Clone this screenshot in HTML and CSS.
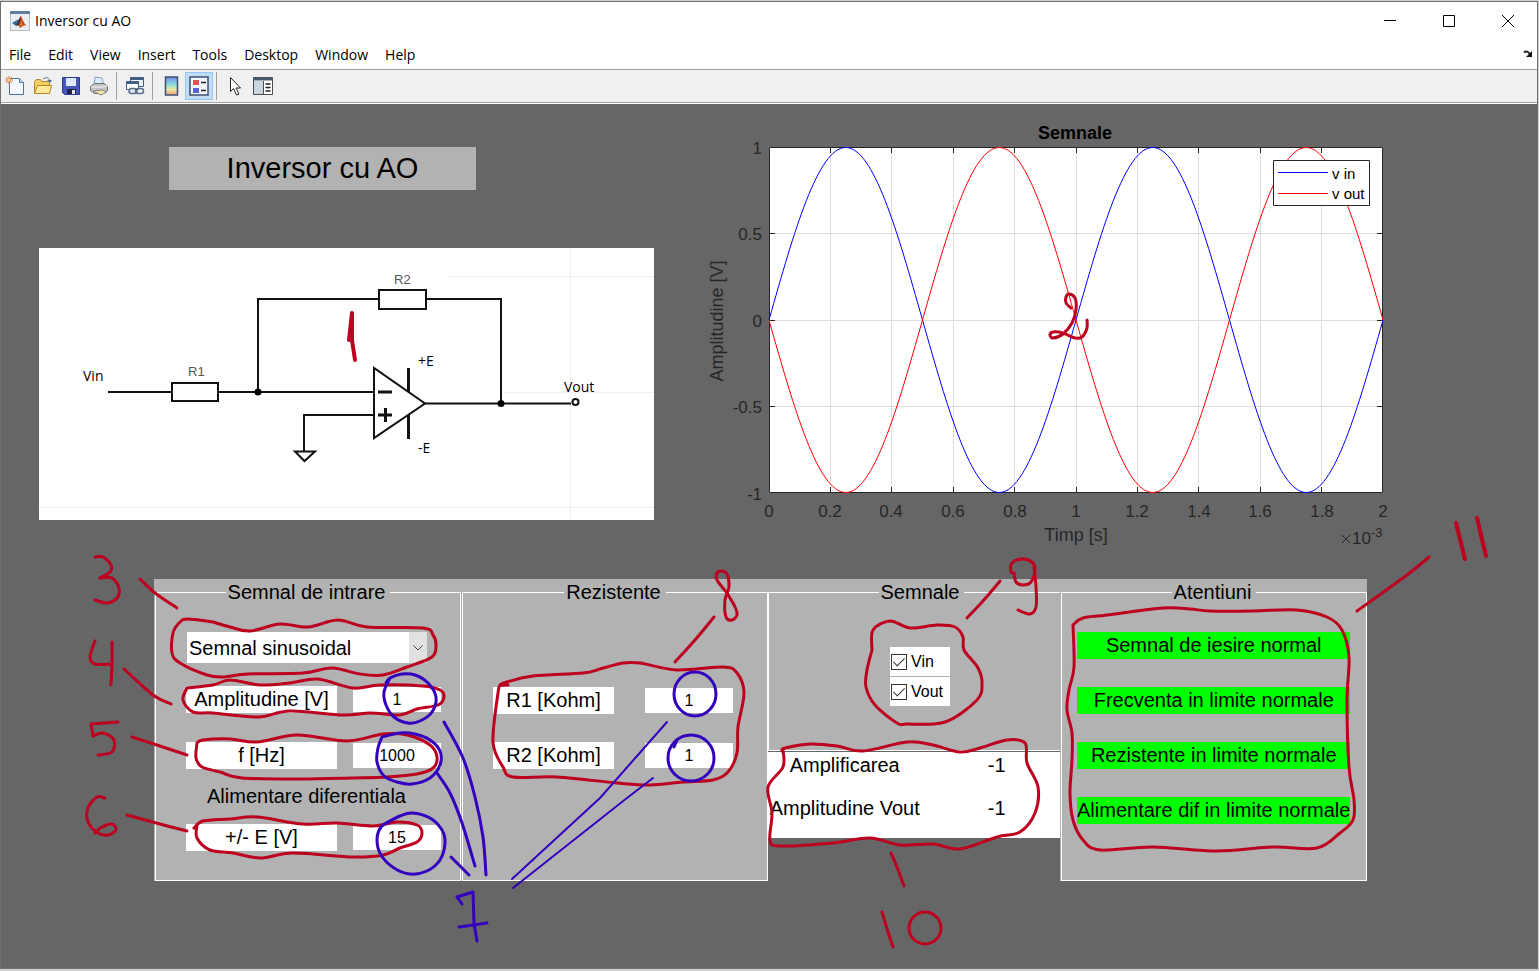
FILE: index.html
```html
<!DOCTYPE html>
<html lang="ro">
<head>
<meta charset="utf-8">
<title>Inversor cu AO</title>
<link rel="stylesheet" href="styles.css">
</head>
<body>
<main class="window">
  <header class="titlebar">
    <svg class="app-icon" viewBox="0 0 20 20" aria-hidden="true">
      <rect x="0.5" y="0.5" width="19" height="19" fill="#eceff1" stroke="#b9bec2"/>
      <rect x="0" y="0" width="20" height="3" fill="#5f7f9c"/>
      <path d="M2 12l5-3 3-1-2 6-2 1z" fill="#2a6f9e"/>
      <path d="M6 14c2-1 3-8 5-9 1 2 3 8 6 10-2-1-3-1-4 0l-3 2-2-3z" fill="#c8491d"/>
      <path d="M11 5c-1 1-2 6-5 9l2 .5c2-2 3-6 3-9.500z" fill="#4a2432"/>
      <path d="M11 8c0 3-.5 6-1 8l2-2z" fill="#f29b38"/>
    </svg>
    <h1 class="window-title">Inversor cu AO</h1>
    <div class="window-buttons">
      <button type="button" aria-label="Minimize"><svg viewBox="0 0 14 14"><path d="M1 6.500h12"/></svg></button>
      <button type="button" aria-label="Maximize"><svg viewBox="0 0 14 14"><path d="M1.500 1.500h11v11h-11z"/></svg></button>
      <button type="button" aria-label="Close"><svg viewBox="0 0 14 14"><path d="M1 1l12 12M13 1L1 13"/></svg></button>
    </div>
  </header>

  <nav class="menubar">
    <button type="button">File</button>
    <button type="button">Edit</button>
    <button type="button">View</button>
    <button type="button">Insert</button>
    <button type="button">Tools</button>
    <button type="button">Desktop</button>
    <button type="button">Window</button>
    <button type="button">Help</button>
    <button type="button" class="dock" aria-label="Dock figure"><svg viewBox="0 0 10 8"><path d="M1 2.500C3 .5 5.500 1.500 7 4.500" fill="none" stroke="#222" stroke-width="2"/><path d="M9 1v6H3z" fill="#111"/></svg></button>
  </nav>

  <div class="toolbar" role="toolbar" aria-label="Figure">
    <button type="button" aria-label="New figure"><svg viewBox="0 0 20 20"><path d="M4.500 2.500h10l4 4v12h-14z" fill="#f6faff" stroke="#51739f"/><path d="M14.500 2.500v4h4" fill="#c7d9ee" stroke="#51739f"/><path d="M4 0v8M0 4h8M1 1l6 6M7 1L1 7" stroke="#d9703c"/><circle cx="4" cy="4" r="1.500" fill="#ffd27a"/></svg></button>
    <button type="button" aria-label="Open"><svg viewBox="0 0 20 20"><path d="M1.500 17.500V5.500l2-2h4l1 2h8v12z" fill="#f3cf62" stroke="#b5892a"/><path d="M1.500 17.500l3-8h14l-2 8z" fill="#ffe998" stroke="#b5892a"/><path d="M10 3c3-2 6-2 7 2" fill="none" stroke="#52779a"/><path d="M14 4h5l-2 3z" fill="#52779a"/></svg></button>
    <button type="button" aria-label="Save"><svg viewBox="0 0 20 20"><path d="M1.500 1.500h17v17h-15l-2-2z" fill="#4758bd" stroke="#30368a"/><path d="M5 2h10v8H5z" fill="#dfe9fb"/><path d="M6 13h9v5H6z" fill="#202341"/><path d="M11 14h3v4h-3z" fill="#e4e8f6"/></svg></button>
    <button type="button" aria-label="Print"><svg viewBox="0 0 20 20"><path d="M5 9L6 1l7 1 2 8z" fill="#dcecff" stroke="#8ea3bd"/><path d="M1.500 10.500l4-3h10l3 3v4l-5 3h-8l-4-3z" fill="#c4c4c4" stroke="#707070"/><path d="M2 11h11l5-1" stroke="#f5f5f5" fill="none"/><path d="M4 15l9-1 5 2-6 3z" fill="#f4e7a4" stroke="#858585"/></svg></button>
    <span class="separator"></span>
    <button type="button" aria-label="Link plot"><svg viewBox="0 0 20 20"><path d="M5.500 1.500h13v9h-13z" fill="#edf3fa" stroke="#3f5f86"/><path d="M6 3h12" stroke="#3f5f86" stroke-width="2"/><path d="M1.500 5.500h12v8h-12z" fill="#fff" stroke="#3f5f86"/><path d="M2 7h11" stroke="#3f5f86" stroke-width="2"/><rect x="4" y="12.500" width="8" height="5" rx="2.500" fill="#dce4ee" stroke="#5b6f88" stroke-width="1.500"/><rect x="10.500" y="12.500" width="8" height="5" rx="2.500" fill="none" stroke="#5b6f88" stroke-width="1.500"/></svg></button>
    <span class="separator"></span>
    <button type="button" aria-label="Insert colorbar"><svg viewBox="0 0 20 20"><defs><linearGradient id="jet" x2="0" y2="1"><stop offset="0" stop-color="#7c8be8"/><stop offset=".4" stop-color="#86dce2"/><stop offset=".7" stop-color="#ece79a"/><stop offset="1" stop-color="#ef9c82"/></linearGradient></defs><path d="M4.500 1h12v18h-12z" fill="url(#jet)" stroke="#3d4f72" stroke-width="1.500"/></svg></button>
    <button type="button" class="pressed" aria-label="Insert legend" aria-pressed="true"><svg viewBox="0 0 20 20"><path d="M1 1h18v18H1z" fill="#f3f6ff" stroke="#3d4f72" stroke-width="1.500"/><path d="M4 4h6v5H4z" fill="#e0564f"/><path d="M4 12h6v5H4z" fill="#5d5fd8"/><path d="M12 6.500h5M12 14.500h5" stroke="#222" stroke-width="1.500"/></svg></button>
    <span class="separator"></span>
    <button type="button" aria-label="Edit plot"><svg viewBox="0 0 20 20"><path d="M5.500 1.500v14l3-3 3 6.500 2.500-1-3-6h4.500z" fill="#fff" stroke="#222"/></svg></button>
    <button type="button" aria-label="Property inspector"><svg viewBox="0 0 20 20"><path d="M.5 1.500h19v17H.5z" fill="#fff" stroke="#4c4c4c"/><path d="M0 3h20" stroke="#48596b" stroke-width="3"/><path d="M1 5h9v13H1z" fill="#c9d5df"/><path d="M10.500 5v13" stroke="#4c4c4c"/><path d="M12.500 8h5M12.500 11.500h5M12.500 15h5" stroke="#222" stroke-width="1.500"/></svg></button>
  </div>

  <section class="figure">
    <div class="upper">
      <div class="schematic">
        <div class="heading-row"><h2 class="heading">Inversor cu AO</h2></div>
        <svg class="circuit" viewBox="0 0 615 272" role="img" aria-label="Schema inversor">
          <g stroke="#f0f0f0"><path d="M410 28.500H615M461 144.500H615M0 259.500H615M531.500 0V272"/></g>
          <g fill="none" stroke="#111" stroke-width="2">
            <path d="M69 144H133M179 144H335M219 144V51H340M387 51H462V155M386 155.500H532M335 167H265V203"/>
            <path d="M133 135H179V153H133ZM340 42H387V61H340Z"/>
            <path d="M335 120V190L386 155.500Z"/>
            <path d="M339 144H353M339 167H353M346.500 160V174M369.500 120V144M369.500 167V191" stroke-width="3"/>
            <path d="M256 203.500H276L265.500 213Z"/>
            <circle cx="536.500" cy="154" r="3"/>
          </g>
          <circle cx="219" cy="144" r="3.500"/><circle cx="462" cy="155.500" r="3.500"/>
          <g class="circuit-text">
            <text x="44" y="133">Vin</text><text x="525" y="144">Vout</text>
            <text x="379" y="118">+E</text><text x="379" y="205">-E</text>
          </g>
          <g class="part-text"><text x="149" y="128">R1</text><text x="355" y="36">R2</text></g>
        </svg>
      </div>

      <svg class="plot" viewBox="0 0 700 434" role="img" aria-label="Semnale">
        <path d="M69 29H683V375H69Z" fill="#fff"/>
        <path d="M130.500 30V374M191.500 30V374M253.500 30V374M314.500 30V374M376.500 30V374M437.500 30V374M498.500 30V374M560.500 30V374M621.500 30V374M70 115.500H682M70 202.500H682M70 288.500H682" stroke="#dedede"/>
        <path d="M69.500 29.500H682.500V374.500H69.500ZM130.500 30v5M191.500 30v5M253.500 30v5M314.500 30v5M376.500 30v5M437.500 30v5M498.500 30v5M560.500 30v5M621.500 30v5M130.500 374v-5M191.500 374v-5M253.500 374v-5M314.500 374v-5M376.500 374v-5M437.500 374v-5M498.500 374v-5M560.500 374v-5M621.500 374v-5M70 115.500h5M70 202.500h5M70 288.500h5M682 115.500h-5M682 202.500h-5M682 288.500h-5" fill="none" stroke="#262626"/>
        <g fill="none">
          <path stroke="#00f" d="M69 202c25-88.400 49-172.500 76.750-172.500c27.750 0 51.750 84.100 76.750 172.500c25 88.400 49 172.500 76.750 172.500c27.750 0 51.750-84.100 76.750-172.500c25-88.400 49-172.500 76.750-172.500c27.750 0 51.750 84.100 76.750 172.500c25 88.400 49 172.500 76.750 172.500c27.750 0 51.750-84.100 76.750-172.500"/>
          <path stroke="#f00" d="M69 202c25 88.400 49 172.500 76.750 172.500c27.750 0 51.750-84.100 76.750-172.500c25-88.400 49-172.500 76.750-172.500c27.750 0 51.750 84.100 76.750 172.500c25 88.400 49 172.500 76.750 172.500c27.750 0 51.750-84.100 76.750-172.500c25-88.400 49-172.500 76.750-172.500c27.750 0 51.750 84.100 76.750 172.500"/>
        </g>
        <text class="plot-title" x="375" y="21">Semnale</text>
        <g class="ticks-y"><text x="62" y="36">1</text><text x="62" y="122">0.5</text><text x="62" y="209">0</text><text x="62" y="295">-0.5</text><text x="62" y="382">-1</text></g>
        <g class="ticks-x"><text x="69" y="399">0</text><text x="130" y="399">0.2</text><text x="191" y="399">0.4</text><text x="253" y="399">0.6</text><text x="315" y="399">0.8</text><text x="376" y="399">1</text><text x="437" y="399">1.2</text><text x="499" y="399">1.4</text><text x="560" y="399">1.6</text><text x="622" y="399">1.8</text><text x="683" y="399">2</text></g>
        <text class="axis-name" x="376" y="423">Timp [s]</text>
        <text class="axis-name" transform="translate(23 203) rotate(-90)">Amplitudine [V]</text>
        <path d="M642 417l8 8M650 417l-8 8" stroke="#262626"/>
        <text class="exponent" x="652" y="426">10</text><text class="power" x="671" y="419">-3</text>
        <path d="M573.500 42.500H669.500V87.500H573.500Z" fill="#fff" stroke="#262626"/>
        <path d="M578 54.500H628" stroke="#00f"/><path d="M578 75.500H628" stroke="#f00"/>
        <g class="legend-text"><text x="632" y="61">v in</text><text x="632" y="81">v out</text></g>
      </svg>
    </div>

    <form class="panels">
      <section class="panel">
        <fieldset class="source">
          <legend>Semnal de intrare</legend>
          <div class="fields">
            <div class="dropdown">
              <select aria-label="Tip semnal"><option>Semnal sinusoidal</option></select>
              <svg viewBox="0 0 18 31" aria-hidden="true"><path d="M4.500 13.500l4.500 4.500 4.500-4.500"/></svg>
            </div>
            <label for="amp">Amplitudine [V]</label><input id="amp" type="text" value="1">
            <label for="freq">f [Hz]</label><input id="freq" type="text" value="1000">
            <p class="caption">Alimentare diferentiala</p>
            <label for="supply">+/- E [V]</label><input id="supply" type="text" value="15">
          </div>
        </fieldset>
      </section>

      <section class="panel">
        <fieldset>
          <legend>Rezistente</legend>
          <div class="fields resistors">
            <label for="r1">R1 [Kohm]</label><input id="r1" type="text" value="1">
            <label for="r2">R2 [Kohm]</label><input id="r2" type="text" value="1">
          </div>
        </fieldset>
      </section>

      <section class="signals">
        <fieldset>
          <legend>Semnale</legend>
          <div class="checks">
            <label><input type="checkbox" checked>Vin</label>
            <label><input type="checkbox" checked>Vout</label>
          </div>
        </fieldset>
        <dl class="results">
          <dt>Amplificarea</dt><dd>-1</dd>
          <dt>Amplitudine Vout</dt><dd>-1</dd>
        </dl>
      </section>

      <section class="panel">
        <fieldset>
          <legend>Atentiuni</legend>
          <ul class="warnings">
            <li>Semnal de iesire normal</li>
            <li>Frecventa in limite normale</li>
            <li>Rezistente in limite normale</li>
            <li>Alimentare dif in limite normale</li>
          </ul>
        </fieldset>
      </section>
    </form>
  </section>
</main>

<svg class="ink" viewBox="0 0 1539 971" preserveAspectRatio="none" aria-hidden="true">
  <g class="red">
    <path class="thick" d="M352 313L349 340M352 313L352 340L355 360"/>
    <path data-points="1071,308 1066,303 1066,297 1069,294 1075,298 1076,310 1072,323 1063,334 1053,338 1050,335 1053,332 1063,333 1075,338 1082,337 1087,328 1087,320"/>
    <path data-points="95,557 103,557 111,565 110,572 100,578"/>
    <path data-points="100,578 112,578 119,588 117,598 107,603 95,600"/>
    <path data-points="140,579 155,593 177,608"/>
    <path data-points="213,622 188,619 180,622 173,633 172,653 180,663 207,675 223,677 247,674 303,673 332,668 360,674 383,675 407,667 432,657 436,645 433,635 423,628 367,627 338,620 308,627 280,624 250,631 230,627 213,622"/>
    <path data-points="95,641 90,657 95,664 111,664"/>
    <path data-points="112,642 112,664 111,685"/>
    <path data-points="124,669 153,695 171,704"/>
    <path data-points="187,688 213,685 230,680 260,685 290,683 318,679 353,688 380,685 423,686 440,690 444,697 438,705 417,709 400,715 370,713 343,715 290,711 258,717 213,713 193,712 183,700 187,688"/>
    <path d="M118 722L91 724L93 736"/>
    <path data-points="93,736 103,733 114,740 112,752 98,755"/>
    <path data-points="132,737 160,746 187,755"/>
    <path data-points="197,743 203,740 230,739 257,742 297,735 347,741 383,734 407,735 430,745 437,757 433,768 417,774 387,777 353,778 300,779 242,778 220,772 202,767 196,758 197,743"/>
    <path data-points="105,798 97,797 88,808 88,822 98,833 108,835 116,830 112,824 102,827 95,833"/>
    <path data-points="127,815 160,824 187,831"/>
    <path data-points="194,828 203,821 230,819 257,817 303,824 337,823 373,826 397,822 417,825 422,833 417,842 400,848 383,855 353,857 293,853 260,858 233,853 210,850 197,838 197,825"/>
    <path data-points="727,593 717,580 717,573 722,571 727,574 729,587 725,600 726,617 732,620 737,615 735,607 727,593"/>
    <path data-points="714,617 695,640 675,662"/>
    <path data-points="508,685 500,685 507,682 533,676 583,673 600,669 623,663 640,663 677,670 723,667 737,673 744,693 738,727 737,753 728,772 713,780 683,782 650,785 617,783 557,777 513,777 503,767 493,742 498,693 500,685"/>
    <path data-points="1014,573 1011,572 1012,563 1022,559 1032,562 1035,570 1031,582 1023,585 1016,582 1014,573"/>
    <path data-points="1034,567 1036,587 1036,607 1030,614 1018,610"/>
    <path data-points="1000,581 983,601 967,618"/>
    <path data-points="872,650 873,630 890,621 910,628 937,625 955,627 963,637 964,650 978,668 982,683 977,700 945,722 907,724 897,723 875,705 866,687 867,670 872,650"/>
    <path data-points="782,751 785,748 810,744 837,746 863,751 907,742 933,745 960,752 980,748 1007,740 1025,743 1027,763 1038,787 1035,813 1020,832 997,837 960,849 933,844 900,845 870,838 833,843 780,846 770,840 772,813 768,787 783,767 783,750"/>
    <path data-points="891,853 897,867 904,886"/>
    <path data-points="882,912 888,932 893,947"/>
    <ellipse cx="925" cy="928" rx="16" ry="16"/>
    <path class="thick" d="M1456 523L1465 559M1477 518L1486 556"/>
    <path data-points="1429,557 1407,575 1357,611"/>
    <path data-points="1073,625 1083,618 1107,615 1163,608 1190,609 1210,611 1253,611 1297,610 1327,617 1342,630 1349,657 1347,700 1349,767 1354,800 1353,820 1340,833 1317,848 1273,847 1217,851 1153,847 1100,850 1083,840 1073,820 1070,793 1072,760 1072,733 1067,710 1069,690 1074,667 1073,625"/>
  </g>
  <g class="blue">
    <path data-points="386,683 390,678 402,674 415,675 428,683 436,697 432,712 420,721 408,723 394,717 386,705 384,692 390,678"/>
    <path data-points="382,737 378,748 377,762 384,776 397,782 412,784 430,778 440,765 440,751 430,740 415,734 400,733 382,737"/>
    <path data-points="386,823 400,816 412,813 430,818 442,830 445,843 440,860 427,871 410,874 394,868 381,855 377,840 381,827 392,820"/>
    <ellipse cx="695" cy="694" rx="21" ry="22"/>
    <ellipse cx="691" cy="758" rx="23" ry="23"/>
    <path d="M677 740L674 747"/>
    <path data-points="444,722 463,758 475,797 483,837 486,875"/>
    <path data-points="437,773 450,793 462,823 475,866"/>
    <path d="M451 857L469 875"/>
    <path class="thin" d="M667 722L600 798L512 879"/>
    <path class="thin" d="M653 778L627 798L513 888"/>
    <path d="M462 904L457 897L473 892L474 923L477 941M459 927L487 923"/>
  </g>
</svg>
<script src="ink.js"></script>
</body>
</html>
```
FILE: styles.css
```css
* { box-sizing: border-box; }

body {
  margin: 0;
  position: relative;
  min-height: 100vh;
  display: flex;
  padding: 1px 1px 2px 0;
  background: #cfcfcf;
  color: #000;
  font-family: "Liberation Sans", Arial, sans-serif;
  font-size: 20px;
}

.window {
  flex: 1;
  display: flex;
  flex-direction: column;
  border: 1px solid #707070;
  background: #fff;
}

button {
  margin: 0;
  padding: 0;
  border: 0;
  background: none;
  color: inherit;
  font: inherit;
}

/* Title bar and menu */
.titlebar,
.menubar {
  display: flex;
  align-items: center;
  font-family: "Open Sans", "Noto Sans", sans-serif;
  font-size: 14px;
}
.titlebar { height: 37px; padding-left: 9px; gap: 5px; }
.app-icon { width: 20px; height: 20px; }
.window-title { margin: 0; flex: 1; font-size: 14px; font-weight: 400; }
.window-buttons { display: flex; }
.window-buttons button {
  width: 59px;
  height: 36px;
  display: grid;
  place-items: center;
}
.window-buttons svg { width: 14px; height: 14px; fill: none; stroke: #000; }
.menubar { height: 30px; padding: 0 4px 0 8px; gap: 17px; }
.dock { margin-left: auto; display: flex; }
.dock svg { width: 10px; height: 8px; }

/* Toolbar */
.toolbar {
  height: 34px;
  display: flex;
  align-items: center;
  border-top: 1px solid #a0a0a0;
  border-bottom: 1px solid #a0a0a0;
  background: #f0f0f0;
}
.toolbar button {
  width: 28px;
  height: 28px;
  display: grid;
  place-items: center;
  border: 1px solid transparent;
}
.toolbar svg { width: 20px; height: 20px; }
.toolbar .pressed { border-color: #90c8f6; background: #c0dcf3; }
.separator { width: 1px; height: 28px; margin: 0 4px 0 3px; background: #a0a0a0; }

/* Figure */
.figure { flex: 1; margin-top: 1px; background: #666; }
.upper {
  display: grid;
  grid-template-columns: 38fr 615fr 46fr 700fr 137fr;
  align-items: start;
  padding-top: 14px;
}
.schematic { grid-column: 2; padding-top: 29px; }
.heading-row { display: grid; grid-template-columns: 130fr 307fr 178fr; }
.heading {
  grid-column: 2;
  margin: 0 0 58px;
  background: #b2b2b2;
  font-size: 29px;
  font-weight: 400;
  line-height: 43px;
  text-align: center;
}
.circuit { display: block; width: 100%; background: #fff; }
.circuit-text { font-family: "Open Sans", "Noto Sans", sans-serif; font-size: 14px; }
.part-text { font-size: 13px; fill: #555; }
.plot { grid-column: 4; display: block; width: 100%; fill: #262626; }
.plot-title { font-size: 18px; font-weight: 700; text-anchor: middle; fill: #000; }
.ticks-x { font-size: 17px; text-anchor: middle; }
.ticks-y { font-size: 17px; text-anchor: end; }
.axis-name { font-size: 18px; text-anchor: middle; }
.exponent { font-size: 17px; }
.power { font-size: 13px; }
.legend-text { font-size: 15px; fill: #000; }

/* Control panels */
.panels {
  display: grid;
  grid-template-columns: 307fr 307fr 292fr 307fr;
  margin: 27px 11.068% 0 9.961%;
}
.panel { display: grid; padding-left: 1px; background: #b2b2b2; }
fieldset { min-width: 0; margin: 0; padding: 0; border: 1px solid #fff; }
legend { margin: 0 auto; padding: 0 5px 0 2px; line-height: 27px; }
.fields {
  display: grid;
  grid-template-columns: 151fr 88fr;
  column-gap: 16px;
  align-items: center;
  padding: 26px 19px 29px 30px;
}
.fields label {
  margin-bottom: 28px;
  background: #fff;
  line-height: 27px;
  text-align: center;
}
.fields input {
  width: 100%;
  height: 25px;
  margin: 0 0 28px;
  padding: 0;
  border: 0;
  background: #fff;
  color: #000;
  font: 16px "Liberation Sans", Arial, sans-serif;
  text-align: center;
}
.source label, .source input { margin-bottom: 0; }
.source .fields { row-gap: 14px; }
.source #freq, .source label[for="freq"] { margin-top: 15px; }
.dropdown { grid-column: 1 / 3; position: relative; margin: 0 14px 9px 1px; }
.dropdown select {
  display: block;
  width: 100%;
  height: 31px;
  padding: 0 0 0 2px;
  border: 0;
  border-radius: 0;
  appearance: none;
  background: #fff;
  color: #000;
  font: inherit;
}
.dropdown svg {
  position: absolute;
  top: 0;
  right: 0;
  width: 18px;
  height: 31px;
  background: #e1e1e1;
  fill: none;
  stroke: #444;
  pointer-events: none;
}
.caption { grid-column: 1 / 3; margin: 0 14px 0 0; line-height: 27px; text-align: center; }
.fields.resistors {
  grid-template-columns: 121fr 88fr;
  column-gap: 31px;
  padding: 81px 34px 0 30px;
}

.signals { display: flex; flex-direction: column; }
.signals fieldset { margin-right: -15px; background: #b2b2b2; box-shadow: 0 -13px #b2b2b2; }
.checks {
  width: 60px;
  display: grid;
  gap: 1px;
  margin: 41px 0 44px 121px;
}
.checks label {
  display: flex;
  align-items: center;
  gap: 4px;
  height: 29px;
  padding-left: 1px;
  background: #fff;
  font-size: 16px;
}
.checks input {
  width: 16px;
  height: 16px;
  margin: 0;
  display: grid;
  place-items: center;
  border: 1px solid #333;
  appearance: none;
  background: #fff;
}
.checks input:checked::after {
  content: "";
  width: 5px;
  height: 10px;
  margin-bottom: 3px;
  border: solid #333;
  border-width: 0 1px 1px 0;
  transform: rotate(45deg);
}
.results {
  display: grid;
  grid-template-columns: 152fr 105fr;
  row-gap: 16px;
  margin: 0;
  padding: 0 35px 16px 1px;
  border-top: 1px solid #666;
  background: #fff;
  line-height: 27px;
  text-align: center;
  white-space: nowrap;
}
.results dd { margin: 0 0 0 48px; }
.warnings {
  display: grid;
  gap: 28px;
  margin: 0;
  padding: 26px 17px 56px 15px;
  list-style: none;
}
.warnings li {
  display: flex;
  justify-content: center;
  background: #0f0;
  line-height: 27px;
  white-space: nowrap;
}

/* Freehand marks over the window */
.ink {
  position: absolute;
  inset: 0;
  width: 100%;
  height: 100%;
  fill: none;
  stroke-width: 3;
  stroke-linecap: round;
  stroke-linejoin: round;
  pointer-events: none;
}
.red { stroke: #bd0020; }
.blue { stroke: #3200be; }
.thick { stroke-width: 4; }
.thin { stroke-width: 2; }
```
FILE: ink.js
```js
// Turns each list of pen positions into one smooth stroke.
document.querySelectorAll(".ink path[data-points]").forEach((path) => {
  const p = path.dataset.points.split(" ").map((s) => s.split(",").map(Number));
  const at = (i) => p[Math.max(0, Math.min(p.length - 1, i))];
  let d = "M" + p[0];
  for (let i = 0; i < p.length - 1; i++) {
    const [a, b, c, e] = [at(i - 1), at(i), at(i + 1), at(i + 2)];
    const c1 = [b[0] + (c[0] - a[0]) / 6, b[1] + (c[1] - a[1]) / 6];
    const c2 = [c[0] - (e[0] - b[0]) / 6, c[1] - (e[1] - b[1]) / 6];
    d += "C" + c1 + " " + c2 + " " + c;
  }
  path.setAttribute("d", d);
});
```
